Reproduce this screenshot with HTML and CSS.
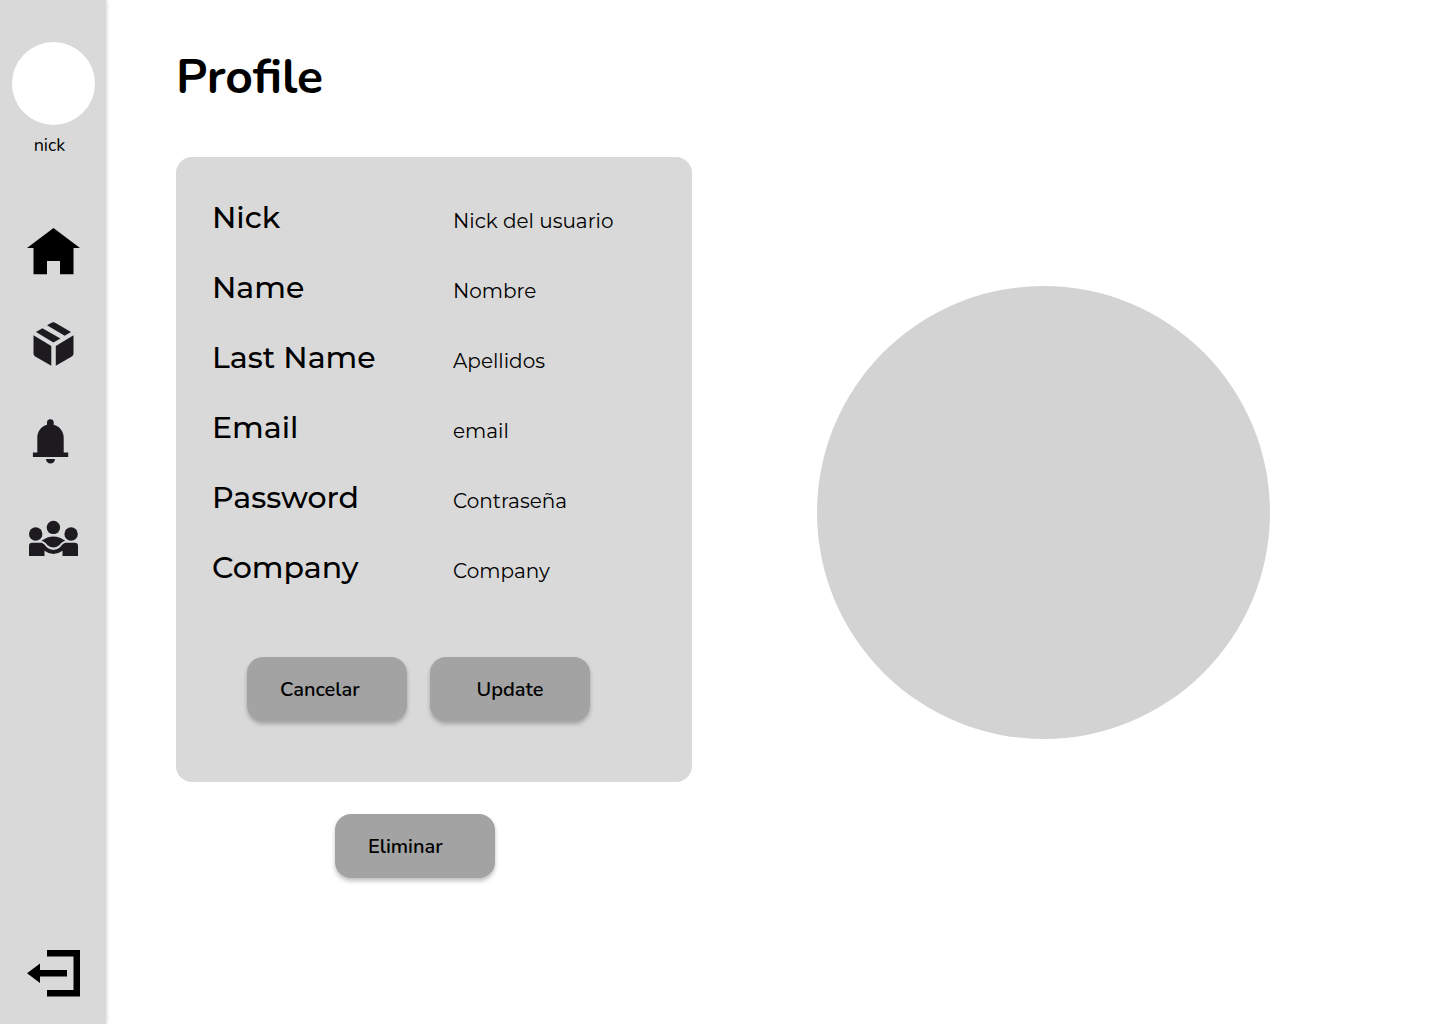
FILE: index.html
```html
<!DOCTYPE html>
<html lang="es">
<head>
<meta charset="utf-8">
<meta name="viewport" content="width=device-width, initial-scale=1">
<title>Profile</title>
<link rel="stylesheet" href="styles.css">
</head>
<body>
<div class="layout">
  <aside class="sidebar">
    <div class="avatar"></div>
    <p class="nick">nick</p>
    <nav class="menu">
      <a href="#home" aria-label="Home">
        <svg width="54" height="48" viewBox="0 0 54 48" fill="#000"><path d="M27.500 1 54 21h-6.500V47.300H34V34H21v13.300H7.500V21H1z"/></svg>
      </a>
      <a href="#packages" aria-label="Packages">
        <svg width="54" height="54" viewBox="0 0 54 54"><path d="M7.500 17.300 25.300 28v19.700L9.200 38.400q-1.700-1-1.700-2.900zM47.500 17.300 29.800 28v19.700L45.800 38.400q1.700-1 1.700-2.900zM21 7.300l4-2.400q2.400-1.200 4.600 0L45 14l-6.300 3.700zM10 14l6.400-3.800 18 10.200-7 4z"/></svg>
      </a>
      <a href="#alerts" aria-label="Notifications">
        <svg width="54" height="54" viewBox="0 0 54 54"><path d="M6.900 37.500h4.400V22.500c0-6 4-11.200 9.700-12.700V7.500a3.350 3.350 0 0 1 6.700 0v2.300c5.800 1.500 10 6.700 10 12.700v15h4.500V42H6.900zM20 44h9a4.500 4.500 0 0 1-9 0z"/></svg>
      </a>
      <a href="#team" aria-label="Team">
        <svg width="54" height="54" viewBox="0 0 54 54"><circle cx="27.400" cy="15.400" r="6.700"/><circle cx="9.700" cy="22" r="6.700"/><circle cx="45.100" cy="22" r="6.700"/><path d="M15.500 28.800q11.900-8.600 23.800 0c-2.800.6-4.600 2.700-6 4.400q-5.900 4.400-11.800 0c-1.400-1.700-3.200-3.800-6-4.400z"/><path d="M3 43.900V34q0-3.200 3.200-3.200h8.200c3.400 0 4.600 2.600 6 4.200q7 6.200 14 0c1.400-1.600 2.600-4.200 6-4.200h8.200Q52 30.800 52 34v9.900H36.500v-5.200q-9.100 6.600-18 0v5.200z"/></svg>
      </a>
    </nav>
    <a class="logout" href="#logout" aria-label="Log out">
      <svg width="54" height="48" viewBox="0 0 54 48" fill="#000"><path d="M21 0h33v46.500H21V40h26.500V6.500H21zM1 23.300l13-9.800V20h27v6.600H14V33z"/></svg>
    </a>
  </aside>

  <main class="content">
    <section class="profile">
      <h1>Profile</h1>
      <div class="card">
        <dl class="fields">
          <dt>Nick</dt><dd>Nick del usuario</dd>
          <dt>Name</dt><dd>Nombre</dd>
          <dt>Last Name</dt><dd>Apellidos</dd>
          <dt>Email</dt><dd>email</dd>
          <dt>Password</dt><dd>Contraseña</dd>
          <dt>Company</dt><dd>Company</dd>
        </dl>
        <div class="actions">
          <button type="button" class="btn">Cancelar</button>
          <button type="button" class="btn btn-centered">Update</button>
        </div>
      </div>
      <button type="button" class="btn btn-delete">Eliminar</button>
    </section>
    <div class="photo"></div>
  </main>
</div>
</body>
</html>
```
FILE: styles.css
```css
* { box-sizing: border-box; }

body {
  margin: 0;
  background: #fff;
  color: #000;
  font-family: Nunito, "Open Sans", sans-serif;
}

h1, p, dl, dd { margin: 0; }

.layout {
  display: flex;
  min-height: 100vh;
}

/* Sidebar */
.sidebar {
  flex: 0 0 106px;
  display: flex;
  flex-direction: column;
  align-items: center;
  padding: 42px 0 26px;
  background: #d9d9d9;
  box-shadow: 0 0 4px rgba(0, 0, 0, 0.25);
}

.sidebar svg { display: block; }
.menu svg { fill: #1d1b20; }
.menu a:first-child svg { fill: #000; }

.avatar {
  width: 83px;
  height: 83px;
  border-radius: 50%;
  background: #fff;
}

.nick {
  margin-right: 7px;
  padding-top: 8px;
  font-size: 18px;
  line-height: 24px;
}

.menu {
  display: flex;
  flex-direction: column;
  gap: 43px;
  margin-top: 70px;
}

.logout { margin-top: auto; }

/* Content */
.content {
  flex: 1;
  display: flex;
  gap: 125px;
  padding: 44px 70px;
}

.profile { flex: 0 1 516px; }

h1 {
  font-size: 48px;
  font-weight: 700;
  line-height: 67px;
}

.card {
  margin-top: 46px;
  padding: 26px 36px 61px;
  border-radius: 16px;
  background: #d9d9d9;
}

.fields {
  display: grid;
  grid-template-columns: 241px 1fr;
  grid-auto-rows: 70px;
  align-items: baseline;
  font-family: Montserrat, Inter, sans-serif;
  line-height: 70px;
}

.fields dt {
  font-size: 30px;
  font-weight: 500;
}

.fields dd {
  font-size: 20px;
  font-weight: 400;
  white-space: nowrap;
}

.actions {
  display: flex;
  gap: 23px;
  margin: 54px 0 0 35px;
}

.btn {
  width: 160px;
  height: 64px;
  padding: 2px 33px 0;
  border: 0;
  border-radius: 16px;
  background: #a3a3a3;
  box-shadow: 0 3px 4px rgba(0, 0, 0, 0.25);
  color: #000;
  font: 600 20px/28px Nunito, "Open Sans", sans-serif;
  text-align: left;
}

.btn-centered { text-align: center; }

.btn-delete {
  display: block;
  margin: 32px 0 0 159px;
}

.photo {
  flex: 0 1 453px;
  align-self: center;
  aspect-ratio: 1;
  border-radius: 50%;
  background: #d3d3d3;
}
```
